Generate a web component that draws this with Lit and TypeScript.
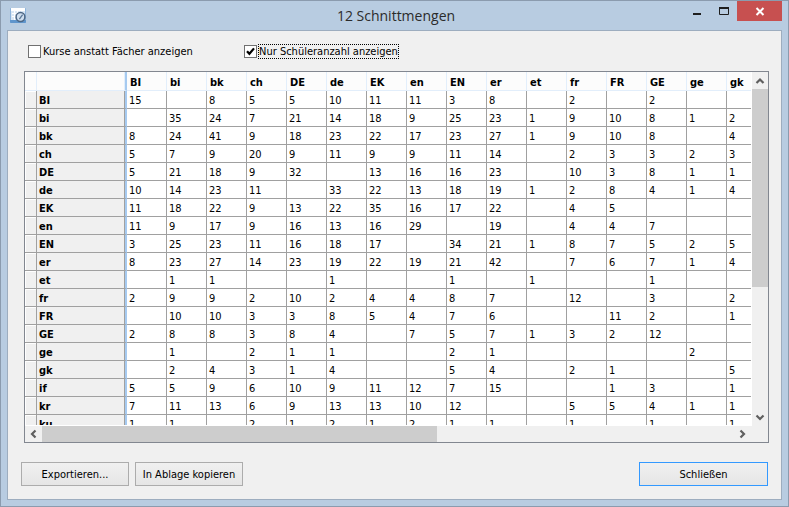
import { LitElement, html, css, svg } from "lit";
import { customElement, state } from "lit/decorators.js";
import { classMap } from "lit/directives/class-map.js";

const COURSES = ["BI", "bi", "bk", "ch", "DE", "de", "EK", "en", "EN", "er", "et", "fr", "FR", "GE", "ge", "gk"];

/* One line per row: the row's name, then one value per course; "-" is an empty cell. */
const ROWS = `
BI 15 - 8 5 5 10 11 11 3 8 - 2 - 2 - -
bi - 35 24 7 21 14 18 9 25 23 1 9 10 8 1 2
bk 8 24 41 9 18 23 22 17 23 27 1 9 10 8 - 4
ch 5 7 9 20 9 11 9 9 11 14 - 2 3 3 2 3
DE 5 21 18 9 32 - 13 16 16 23 - 10 3 8 1 1
de 10 14 23 11 - 33 22 13 18 19 1 2 8 4 1 4
EK 11 18 22 9 13 22 35 16 17 22 - 4 5 - - -
en 11 9 17 9 16 13 16 29 - 19 - 4 4 7 - -
EN 3 25 23 11 16 18 17 - 34 21 1 8 7 5 2 5
er 8 23 27 14 23 19 22 19 21 42 - 7 6 7 1 4
et - 1 1 - - 1 - - 1 - 1 - - 1 - -
fr 2 9 9 2 10 2 4 4 8 7 - 12 - 3 - 2
FR - 10 10 3 3 8 5 4 7 6 - - 11 2 - 1
GE 2 8 8 3 8 4 - 7 5 7 1 3 2 12 - -
ge - 1 - 2 1 1 - - 2 1 - - - - 2 -
gk - 2 4 3 1 4 - - 5 4 - 2 1 - - 5
if 5 5 9 6 10 9 11 12 7 15 - - 1 3 - 1
kr 7 11 13 6 9 13 13 10 12 - - 5 5 4 1 1
ku 1 1 - 2 1 2 1 2 1 1 - 1 - 1 - 1`
  .trim()
  .split("\n")
  .map((line) => {
    const [name, ...values] = line.split(" ");
    return { name, values: values.map((v) => (v === "-" ? "" : v)) };
  });

const ARROWS: Record<string, string> = {
  up: "M4.5 10.5 8 7 11.5 10.5",
  down: "M4.5 6 8 9.5 11.5 6",
  left: "M10 4.5 6.5 8 10 11.5",
  right: "M5 4.5 8.5 8 5 11.5",
};

const arrow = (dir: string) => html`
  <svg class="arrow" viewBox="0 0 16 16" width="16" height="16" aria-hidden="true">
    ${svg`<path d=${ARROWS[dir]} fill="none" stroke="#5f5f5f" stroke-width="2.2"/>`}
  </svg>`;

@customElement("title-bar")
class TitleBar extends LitElement {
  static styles = css`
    :host {
      display: grid;
      grid-template-columns: 1fr auto 1fr;
      height: 29px;
      padding-left: 3px;
    }
    .icon { margin-top: 7px; }
    .title {
      margin: 0;
      font: 400 14px/30px "Open Sans", sans-serif;
      color: #2b2b2b;
    }
    .controls {
      display: flex;
      justify-content: flex-end;
      align-items: flex-start;
    }
    button {
      display: block;
      width: 27px;
      height: 20px;
      padding: 0;
      border: 0;
      background: none;
    }
    button.close {
      width: 45px;
      background: #c75050;
    }
    svg { display: block; }
  `;

  render() {
    return html`
      <svg class="icon" width="16" height="16" viewBox="0 0 16 16" aria-hidden="true">
        <rect width="16" height="15" rx="1" fill="#8db4dc" />
        <path d="M0 12h16v2a1 1 0 0 1-1 1H1a1 1 0 0 1-1-1z" fill="#5f95cc" />
        <rect x="1" width="14" height="12" fill="#d9e7f5" />
        <path d="M1 1.5h14" stroke="#fff" stroke-width="3" />
        <path d="M2 5.5h12M2 8.5h12M4.5 3v9M7.5 3v9" stroke="#fff" />
        <circle cx="10.5" cy="9" r="4.4" fill="#cfdeee" stroke="#4c6684" stroke-width="1.5" />
        <path d="M12.6 6.6 9.4 11.2" stroke="#5b7898" stroke-width="1.3" />
      </svg>
      <h1 class="title">12 Schnittmengen</h1>
      <div class="controls">
        <button aria-label="Minimieren">
          <svg width="27" height="20"><path d="M10 13h8" stroke="#1e1e1e" stroke-width="2" /></svg>
        </button>
        <button aria-label="Maximieren">
          <svg width="27" height="20">
            <path d="M9.5 7.5h9v6h-9z" fill="none" stroke="#1e1e1e" />
            <path d="M9 7h10" stroke="#1e1e1e" stroke-width="2" />
          </svg>
        </button>
        <button class="close" aria-label="Fenster schließen">
          <svg width="45" height="20"><path d="M19.5 7l7 7M26.5 7l-7 7" stroke="#fff" stroke-width="2" /></svg>
        </button>
      </div>`;
  }
}

@customElement("intersection-grid")
class IntersectionGrid extends LitElement {
  static styles = css`
    :host {
      display: grid;
      grid-template: minmax(0, 1fr) 16px / minmax(0, 1fr) 16px;
      border: 1px solid #828790;
      background: #f0f0f0;
      min-height: 0;
    }
    .view {
      overflow: hidden;
      background: #fff;
      border: solid #fff;
      border-width: 0 1px 1px 0;
    }
    table {
      table-layout: fixed;
      width: 742px;
      border-collapse: separate;
      border-spacing: 0;
      font-size: 11px;
      line-height: 15px;
    }
    .c-mark { width: 12px; }
    .c-name { width: 90px; }
    .c-value { width: 40px; }
    th, td {
      box-sizing: border-box;
      height: 18px;
      padding: 2px 0 0 2px;
      border: solid #a0a0a0;
      border-width: 0 1px 1px 0;
      text-align: left;
      white-space: nowrap;
    }
    thead th {
      height: 19px;
      padding: 3px 0 0 3px;
      background: #fcfcfc;
      border-color: #e2eefb;
    }
    tbody .mark, tbody .name { background: #f0f0f0; }
    tbody .mark { box-shadow: inset 1px 1px #fff; }
    thead .name, tbody .name {
      padding: 0;
      border-right: 2px solid #a6caf0;
    }
    .name div {
      padding: 2px 0 0 2px;
      border-right: 1px solid #a0a0a0;
    }
    thead .name div {
      height: 16px;
      border-color: #e2eefb;
    }
    .bar {
      display: flex;
      min-width: 0;
      min-height: 0;
    }
    .bar.v { flex-direction: column; }
    .bar.h { grid-row: 2; }
    .arrow { display: block; flex: none; }
    .v .arrow { height: 17px; }
    .h .arrow { width: 17px; }
    .track { flex: 1; display: flex; min-width: 0; min-height: 0; }
    .v .track { flex-direction: column; }
    .thumb { background: #cdcdcd; }
    .v .thumb { height: 62%; }
    .h .thumb { width: 57%; }
  `;

  render() {
    return html`
      <div class="view">
        <table>
          <colgroup>
            <col class="c-mark" />
            <col class="c-name" />
            ${COURSES.map(() => html`<col class="c-value" />`)}
          </colgroup>
          <thead>
            <tr>
              <th class="mark"></th>
              <th class="name"><div></div></th>
              ${COURSES.map((c) => html`<th scope="col">${c}</th>`)}
            </tr>
          </thead>
          <tbody>
            ${ROWS.map((r) => html`
              <tr>
                <td class="mark"></td>
                <th class="name" scope="row"><div>${r.name}</div></th>
                ${r.values.map((v) => html`<td>${v}</td>`)}
              </tr>`)}
          </tbody>
        </table>
      </div>
      <div class="bar v">
        ${arrow("up")}
        <div class="track"><div class="thumb"></div></div>
        ${arrow("down")}
      </div>
      <div class="bar h">
        ${arrow("left")}
        <div class="track"><div class="thumb"></div></div>
        ${arrow("right")}
      </div>`;
  }
}

@customElement("app-root")
class AppRoot extends LitElement {
  static styles = css`
    :host {
      display: flex;
      flex-direction: column;
      box-sizing: border-box;
      height: 100vh;
      padding: 0 6px 6px;
      border: 1px solid #8b9bae;
      background: #b8cce1;
      color: #000;
      font: 11px/15px "DejaVu Sans Condensed", "DejaVu Sans", sans-serif;
    }
    .client {
      flex: 1;
      display: flex;
      flex-direction: column;
      min-height: 0;
      border: 1px solid #9dadbf;
      background: #f0f0f0;
    }
    .options {
      display: grid;
      grid-template-columns: 216px auto;
      justify-content: start;
      padding: 13px 20px 12px;
    }
    label {
      display: flex;
      align-items: center;
      gap: 1px;
      white-space: nowrap;
    }
    label span { padding: 0 1px; }
    label.focus span {
      outline: 1px dotted #000;
      outline-offset: -1px;
    }
    input {
      appearance: none;
      width: 13px;
      height: 13px;
      margin: 0;
      border: 1px solid #707070;
      background: #fff;
    }
    .box { display: grid; }
    .box > * { grid-area: 1 / 1; }
    .tick { pointer-events: none; visibility: hidden; }
    input:checked + .tick { visibility: visible; }
    intersection-grid { flex: 1; margin: 0 12px 0 16px; }
    .actions {
      display: flex;
      gap: 6px;
      padding: 19px 13px 13px;
    }
    .actions button {
      box-sizing: border-box;
      width: 108px;
      height: 24px;
      padding: 0;
      border: 1px solid #acacac;
      background: linear-gradient(#f0f0f0, #e5e5e5);
      color: inherit;
      font: inherit;
      white-space: nowrap;
    }
    .actions button.default {
      width: 129px;
      margin-left: auto;
      border-color: #3399ff;
    }
  `;

  @state() private showCourses = false;
  @state() private countOnly = true;

  private option(text: string, checked: boolean, focus: boolean, set: (on: boolean) => void) {
    return html`
      <label class=${classMap({ focus })}>
        <div class="box">
          <input type="checkbox" .checked=${checked}
            @change=${(e: Event) => set((e.target as HTMLInputElement).checked)} />
          <svg class="tick" width="13" height="13" aria-hidden="true">
            <path d="M3 6.2 5.4 8.8 10 3.4" fill="none" stroke="#000" stroke-width="2.2" />
          </svg>
        </div>
        <span>${text}</span>
      </label>`;
  }

  render() {
    return html`
      <title-bar></title-bar>
      <main class="client">
        <div class="options">
          ${this.option("Kurse anstatt Fächer anzeigen", this.showCourses, false, (on) => (this.showCourses = on))}
          ${this.option("Nur Schüleranzahl anzeigen", this.countOnly, true, (on) => (this.countOnly = on))}
        </div>
        <intersection-grid></intersection-grid>
        <div class="actions">
          <button>Exportieren...</button>
          <button>In Ablage kopieren</button>
          <button class="default">Schließen</button>
        </div>
      </main>`;
  }
}
